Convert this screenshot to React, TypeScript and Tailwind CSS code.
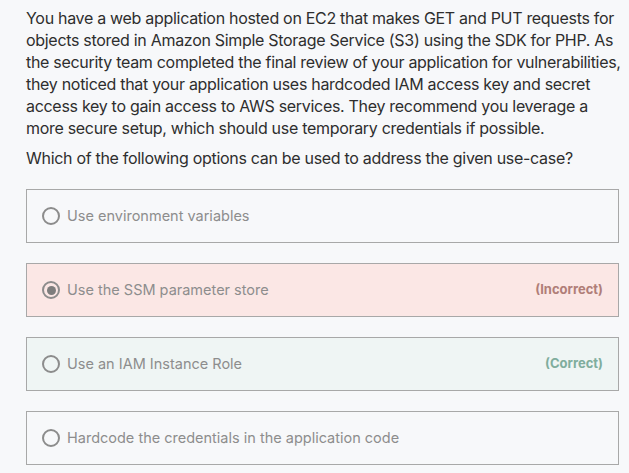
import React from "react";

type Opt = { text: string; state?: "incorrect" | "correct"; selected?: boolean };

const options: Opt[] = [
  { text: "Use environment variables" },
  { text: "Use the SSM parameter store", state: "incorrect", selected: true },
  { text: "Use an IAM Instance Role", state: "correct" },
  { text: "Hardcode the credentials in the application code" },
];

const lines = [
  "You have a web application hosted on EC2 that makes GET and PUT requests for",
  "objects stored in Amazon Simple Storage Service (S3) using the SDK for PHP. As",
  "the security team completed the final review of your application for vulnerabilities,",
  "they noticed that your application uses hardcoded IAM access key and secret",
  "access key to gain access to AWS services. They recommend you leverage a",
  "more secure setup, which should use temporary credentials if possible.",
];

export default function App() {
  return (
    <div
      className="min-h-[473px] w-[629px] bg-[#f7f8fa] pl-[26px] pr-[10px] pt-[7px]"
      style={{ fontFamily: "Inter, 'Noto Sans', sans-serif" }}
    >
      <p className="text-[16px] leading-[22px] text-[#2e2e2e] tracking-[-0.3px] whitespace-nowrap">
        {lines.map((l, i) => (
          <span key={i} className="block">
            {l}
          </span>
        ))}
      </p>
      <p className="mt-[8px] text-[16px] leading-[22px] text-[#2e2e2e] tracking-[-0.3px] whitespace-nowrap">
        Which of the following options can be used to address the given use-case?
      </p>
      <div className="mt-[20px] flex flex-col gap-[20px]">
        {options.map((o) => (
          <div
            key={o.text}
            className={
              "flex h-[54px] items-center border border-[#a8a8a8] pl-[15px] pr-[15px] " +
              (o.state === "incorrect"
                ? "bg-[#fbe7e5]"
                : o.state === "correct"
                ? "bg-[#eff5f4]"
                : "bg-[#f7f8fa]")
            }
          >
            <span className="flex h-[18px] w-[18px] items-center justify-center rounded-full border-2 border-[#8c8c8c]">
              {o.selected && <span className="h-[9px] w-[9px] rounded-full bg-[#7d7d7d]" />}
            </span>
            <span className="ml-[7px] text-[14.5px] text-[#8d8d8d]">{o.text}</span>
            {o.state && (
              <span
                className={
                  "ml-auto text-[13px] font-bold " +
                  (o.state === "incorrect" ? "text-[#b07e78]" : "text-[#80ad9d]")
                }
              >
                {o.state === "incorrect" ? "(Incorrect)" : "(Correct)"}
              </span>
            )}
          </div>
        ))}
      </div>
    </div>
  );
}
